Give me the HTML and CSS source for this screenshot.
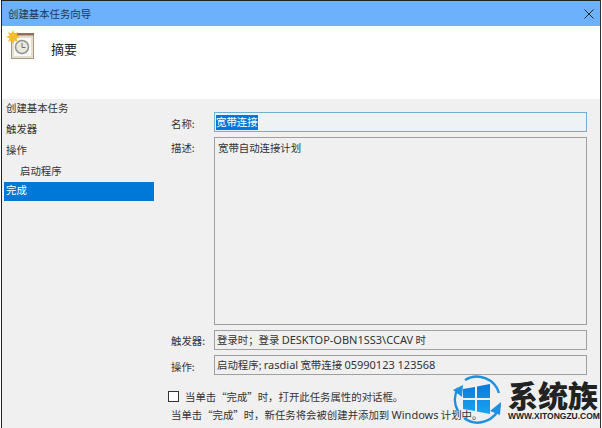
FILE: index.html
```html
<!DOCTYPE html>
<html lang="zh-CN">
<head>
<meta charset="utf-8">
<title>创建基本任务向导</title>
<link rel="stylesheet" href="styles.css">
</head>
<body>
<div class="window">
  <div class="titlebar">
    <span class="title">创建基本任务向导</span>
    <svg class="close" width="10" height="10" viewBox="0 0 10 10"><path d="M0.5 0.5L9.500 9.500M9.500 0.5L0.5 9.500" stroke="#1d2a3a" stroke-width="1" fill="none"/></svg>
  </div>
  <div class="header">
    <svg class="task-icon" width="30" height="30" viewBox="0 0 30 30">
      <rect x="4.500" y="2.500" width="22" height="24" fill="#e6decd" stroke="#a59a88"/>
      <rect x="4" y="1" width="23" height="2.500" fill="#94705a"/>
      <rect x="7" y="6" width="17" height="18" fill="#fbf9f3"/>
      <circle cx="15" cy="15" r="6.500" fill="#ece8dc" stroke="#8b989b" stroke-width="1.500"/>
      <path d="M15 11V15.500H18.500" stroke="#66707a" stroke-width="1" fill="none"/>
      <path d="M6 -2L7.500 1.500L11 0L9.500 3.500L13 5L9.500 6.500L11 10L7.500 8.500L6 12L4.500 8.500L1 10L2.500 6.500L-1 5L2.500 3.500L1 0L4.500 1.500Z" fill="#f8bd2c"/>
    </svg>
    <span class="heading">摘要</span>
  </div>
  <div class="content">
    <nav class="steps">
      <div class="step">创建基本任务</div>
      <div class="step">触发器</div>
      <div class="step">操作</div>
      <div class="step sub">启动程序</div>
      <div class="step active">完成</div>
    </nav>
    <main class="form">
      <div class="row name-row">
        <span class="label">名称:</span>
        <div class="field focus"><span class="selected">宽带连接</span></div>
      </div>
      <div class="row desc-row">
        <span class="label">描述:</span>
        <div class="field area">宽带自动连接计划</div>
      </div>
      <div class="row trigger-row">
        <span class="label">触发器:</span>
        <div class="field">登录时；登录 <span class="lat">DESKTOP-OBN1SS3\CCAV</span> 时</div>
      </div>
      <div class="row action-row">
        <span class="label">操作:</span>
        <div class="field">启动程序; <span class="lat">rasdial</span> 宽带连接 <span class="lat">05990123 123568</span></div>
      </div>
      <label class="check-line"><span class="checkbox"></span>当单击“完成”时，打开此任务属性的对话框。</label>
      <p class="note">当单击“完成”时，新任务将会被创建并添加到 <span class="lat">Windows</span> 计划中。</p>
    </main>
  </div>
  <div class="watermark">
    <svg width="50" height="52" viewBox="0 0 50 52">
      <defs>
        <linearGradient id="pane" x1="0" y1="0" x2="0" y2="1">
          <stop offset="0" stop-color="#0a78dc"/>
          <stop offset="1" stop-color="#18a6ee"/>
        </linearGradient>
      </defs>
      <path d="M12 7A23 23 0 0 1 46 20" stroke="#1f8fe0" stroke-width="2.500" fill="none"/>
      <path d="M5 38A23 23 0 0 1 5 15" stroke="#1f8fe0" stroke-width="2.500" fill="none"/>
      <path d="M11 45A23 23 0 0 0 47 32" stroke="#1f8fe0" stroke-width="2.500" fill="none"/>
      <path d="M0 17L10 12L9 24Z" fill="#1f8fe0"/>
      <path d="M37 38L48 29L47 42Z" fill="#1f8fe0"/>
      <path d="M10 16L22 14V25H10ZM24 13.500L37 11V25H24ZM10 27H22V38L10 36ZM24 27H37V41L24 38.500Z" fill="url(#pane)"/>
    </svg>
    <div class="wm-text">
      <span class="wm-name">系统族</span>
      <span class="wm-url">WWW.XITONGZU.COM</span>
    </div>
  </div>
</div>
</body>
</html>
```

FILE: styles.css
```css
* { box-sizing: border-box; }
html, body { margin: 0; padding: 0; }
body {
  width: 602px;
  height: 428px;
  overflow: hidden;
  background: #fff;
  font-family: "Noto Sans CJK SC", "Liberation Sans", sans-serif;
  font-size: 10.400px;
  color: #333;
}
.window {
  position: relative;
  width: 600px;
  height: 428px;
  margin-left: 1px;
  border-top: 1px solid #222;
  border-left: 1px solid #222;
  border-right: 1px solid #333;
  display: flex;
  flex-direction: column;
  overflow: hidden;
}
.titlebar {
  height: 25px;
  flex: none;
  background: #6cb1fb;
  display: flex;
  align-items: center;
  justify-content: space-between;
  padding: 0 6px 0 6px;
  color: #23384f;
}
.header {
  height: 73px;
  flex: none;
  background: #fff;
  display: flex;
  align-items: flex-start;
  padding: 6px 0 0 5px;
}
.task-icon { flex: none; overflow: visible; }
.heading {
  margin: 8px 0 0 14px;
  font-size: 13px;
  line-height: 18px;
  color: #222;
}
.content {
  flex: 1;
  display: flex;
  background: #f0f0f0;
  min-height: 0;
}
.steps {
  width: 152px;
  flex: none;
  padding: 0 0 0 2px;
}
.step {
  height: 21px;
  line-height: 21px;
  padding-left: 2px;
  color: #333;
}
.step:first-child {
  height: 19px;
  line-height: 17px;
}
.step.sub { padding-left: 16px; }
.step.active {
  height: 19px;
  margin-top: 1px;
  line-height: 16px;
  padding-left: 2px;
  background: #0078d7;
  color: #fff;
}
.form {
  flex: 1;
  padding: 13px 0 0 17px;
  display: flex;
  flex-direction: column;
}
.row {
  display: flex;
  width: 416px;
}
.label {
  width: 43px;
  flex: none;
  color: #333;
  line-height: 22px;
}
.name-row { height: 20px; }
.name-row .label { line-height: 24px; }
.desc-row { height: 188px; margin-top: 5px; }
.trigger-row { height: 20px; margin-top: 5px; }
.action-row { height: 20px; margin-top: 5px; }
.action-row .label { line-height: 24px; }
.field {
  flex: 1;
  border: 1px solid #a0a0a0;
  padding: 0 2px;
  line-height: 18px;
  color: #333;
  white-space: nowrap;
}
.lat {
  font-family: "Noto Sans", "Liberation Sans", sans-serif;
  font-size: 11px;
}
.field.focus {
  border: 1px solid #6fb0d2;
  background: #eef2f5;
  padding: 2px 1px 0;
}
.selected {
  display: block;
  width: 42px;
  height: 15px;
  line-height: 14px;
  background: #0078d7;
  color: #fff;
}
.field.area { padding: 1px 3px 0; }
.check-line {
  display: flex;
  align-items: center;
  height: 14px;
  margin: 14px 0 0 -3px;
  color: #333;
}
.checkbox {
  width: 11px;
  height: 11px;
  margin-right: 6px;
  border: 1px solid #333;
  background: #fff;
  flex: none;
}
.note {
  margin: 4px 0 0;
  line-height: 16px;
  color: #333;
  white-space: nowrap;
}
.watermark {
  position: absolute;
  left: 451px;
  top: 372px;
  display: flex;
  align-items: flex-start;
  gap: 5px;
}
.wm-text {
  display: flex;
  flex-direction: column;
  margin-top: 4px;
}
.wm-name {
  font-size: 30px;
  line-height: 34px;
  font-weight: 900;
  color: #222;
  white-space: nowrap;
}
.wm-url {
  font-family: "Liberation Sans", sans-serif;
  font-size: 8.500px;
  font-weight: 700;
  line-height: 10px;
  color: #222;
  white-space: nowrap;
}
```
